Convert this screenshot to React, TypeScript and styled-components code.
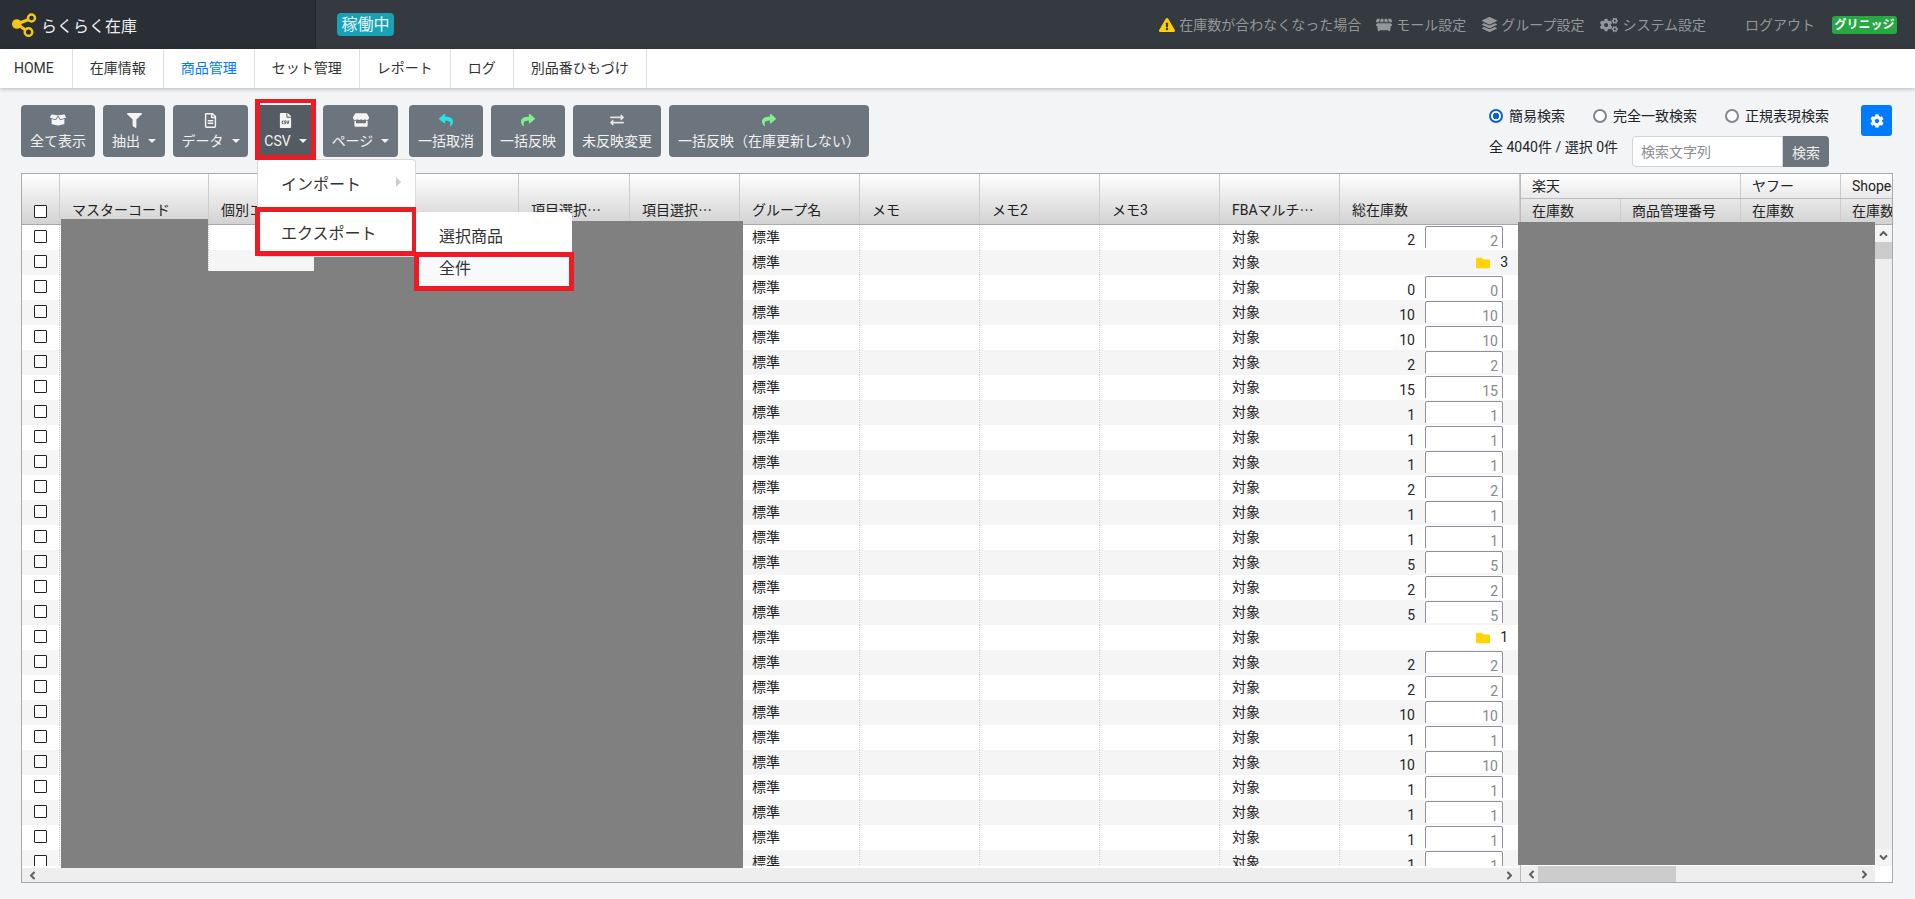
import React from 'react';
import styled, { createGlobalStyle } from 'styled-components';
import {
    FaAngleDown, FaAngleLeft, FaAngleRight, FaAngleUp, FaBoxOpen, FaCog, FaCogs, FaDumpster,
    FaExchangeAlt, FaExclamationTriangle, FaFileCsv, FaFilter, FaFolder, FaLayerGroup,
    FaRegFileAlt, FaReply, FaShare, FaStore,
} from 'react-icons/fa';

const FONT = `Roboto, "Noto Sans CJK JP", sans-serif`;

const GlobalStyle = createGlobalStyle`
    html, body {
        margin: 0;
        padding: 0;
        height: 100%;
        overflow: hidden;
        background: #f3f4f6;
        font-family: ${FONT};
        font-size: 14px;
        color: #212529;
    }
    * { box-sizing: border-box; }
`;

/* top bar */
const TopBar = styled.header`
    display: flex;
    height: 49px;
    background: #343a40;
`;
const Brand = styled.div`
    display: flex;
    align-items: center;
    gap: 4px;
    width: 316px;
    padding-left: 12px;
    background: #2a2e35;
    border-right: 1px solid #23262b;
    color: #eee;
    font-size: 16px;
`;
const StatusBadge = styled.span`
    align-self: center;
    margin-left: 21px;
    width: 57px;
    height: 23px;
    border-radius: 4px;
    background: #17a2b8;
    color: #e8f6f8;
    font-size: 16px;
    line-height: 23px;
    text-align: center;
`;
const TopLinks = styled.nav`
    display: flex;
    align-items: center;
    margin-left: auto;
    padding-right: 18px;
    color: #94979a;
    line-height: 20px;
`;
const TopLink = styled.span<{ $gap?: number }>`
    display: flex;
    align-items: center;
    gap: 4px;
    margin-right: ${p => p.$gap ?? 15}px;
    svg { flex: none; }
`;
const PlanBadge = styled.span`
    width: 65px;
    height: 18px;
    margin-top: 1px;
    border-radius: 3px;
    background: #28a745;
    color: #fff;
    font-size: 12px;
    font-weight: 700;
    line-height: 18px;
    text-align: center;
`;

/* menu */
const MenuBar = styled.nav`
    position: relative;
    display: flex;
    height: 39px;
    background: #fff;
    box-shadow: 0 1px 4px rgba(0, 0, 0, 0.25);
`;
const MenuLink = styled.a<{ $active?: boolean }>`
    padding: 0 17px;
    border-right: 1px solid #dfdfdf;
    color: ${p => (p.$active ? '#007bff' : '#333')};
    line-height: 39px;
    &:first-child { padding: 0 18px 0 14px; }
`;

/* toolbar */
const Main = styled.main`
    padding: 17px 22px 0 21px;
`;
const Toolbar = styled.div`
    position: relative;
    z-index: 5;
    display: flex;
    align-items: flex-start;
    margin-bottom: 6px;
`;
const ButtonGroup = styled.div`
    display: flex;
    gap: 8px;
`;
const ToolSlot = styled.div<{ $apart?: boolean }>`
    position: relative;
    margin-left: ${p => (p.$apart ? 3 : 0)}px;
`;
const ToolButton = styled.button<{ $pressed?: boolean; $w?: number }>`
    display: flex;
    flex-direction: column;
    align-items: center;
    width: ${p => (p.$w ? `${p.$w}px` : 'auto')};
    height: 52px;
    padding: 6px ${p => (p.$w ? 0 : 9)}px 0;
    border: 0;
    border-radius: 4px;
    background: ${p => (p.$pressed ? '#545b62' : '#6c757d')};
    color: #f1f1f1;
    font-family: ${FONT};
    font-size: 14px;
    white-space: nowrap;
`;
const ToolIcon = styled.span<{ $color?: string }>`
    display: flex;
    align-items: center;
    justify-content: center;
    height: 18px;
    color: ${p => p.$color ?? '#f4f4f4'};
`;
const ToolLabel = styled.span`
    display: flex;
    align-items: center;
    height: 22px;
    margin-top: 1px;
    line-height: 22px;
`;
const Caret = styled.i`
    width: 0;
    height: 0;
    margin-left: 8px;
    border-top: 4px solid #f1f1f1;
    border-left: 4px solid transparent;
    border-right: 4px solid transparent;
`;
const RedFrame = styled.span`
    position: absolute;
    z-index: 3;
    border: 5px solid #ed1c24;
    pointer-events: none;
`;
const CsvFrame = styled(RedFrame)`
    top: -6px;
    left: -1px;
    right: -1px;
    bottom: -3px;
    border-top-width: 4px;
`;

/* csv dropdown */
const Dropdown = styled.div`
    position: absolute;
    top: 54px;
    left: 1px;
    width: 159px;
    height: 98px;
    border: 1px solid rgba(0, 0, 0, 0.15);
    border-radius: 4px;
    background: #fff;
    color: #333;
    font-size: 16px;
`;
const DropdownItem = styled.div`
    position: relative;
    height: 49px;
    padding-left: 23px;
    line-height: 49px;
`;
const SubCaret = styled.i`
    position: absolute;
    top: 17px;
    right: 14px;
    width: 0;
    height: 0;
    border-left: 5px solid #ccc;
    border-top: 5px solid transparent;
    border-bottom: 5px solid transparent;
`;
const SubMenu = styled.div`
    position: absolute;
    top: 52px;
    left: 158px;
    width: 156px;
    height: 77px;
    padding-top: 9px;
    border-radius: 4px;
    background: #fff;
`;
const SubItem = styled.div<{ $hover?: boolean }>`
    height: 32px;
    padding-left: 23px;
    background: ${p => (p.$hover ? '#f8f9fa' : 'transparent')};
    line-height: 32px;
`;
const ExportFrame = styled(RedFrame)`
    top: 47px;
    left: -3px;
    width: 161px;
    height: 49px;
    border-right-width: 4px;
`;
const AllFrame = styled(RedFrame)`
    top: 92px;
    left: 156px;
    width: 160px;
    height: 39px;
`;

/* search */
const SearchPanel = styled.div`
    display: flex;
    flex-direction: column;
    width: 340px;
    margin-left: auto;
`;
const RadioRow = styled.div`
    display: flex;
    gap: 28px;
    height: 22px;
`;
const RadioLabel = styled.label`
    display: flex;
    align-items: center;
    gap: 6px;
    line-height: 22px;
`;
const Radio = styled.input`
    appearance: none;
    flex: none;
    width: 14px;
    height: 14px;
    margin: 0;
    border: 2px solid #85858f;
    border-radius: 50%;
    background: #fff;
    &:checked {
        border-color: #0b62d8;
        background: radial-gradient(circle, #0b62d8 0 3px, #fff 3.5px);
    }
`;
const SearchRow = styled.div`
    display: flex;
    align-items: flex-start;
    margin-top: 9px;
`;
const Stats = styled.span`
    width: 143px;
    line-height: 22px;
`;
const SearchInput = styled.input`
    width: 151px;
    height: 31px;
    padding: 0 8px;
    border: 1px solid #ced4da;
    border-radius: 4px 0 0 4px;
    background: #fff;
    font-family: ${FONT};
    font-size: 14px;
    &::placeholder { color: #8a8f94; }
`;
const SearchButton = styled.button`
    width: 46px;
    height: 31px;
    padding: 0;
    border: 0;
    border-radius: 0 4px 4px 0;
    background: #6c757d;
    color: #eee;
    font-family: ${FONT};
    font-size: 14px;
`;
const GearButton = styled.button`
    display: flex;
    align-items: center;
    justify-content: center;
    width: 31px;
    height: 31px;
    margin: 0 1px 0 32px;
    padding: 0;
    border: 0;
    border-radius: 3px;
    background: #007bff;
    color: #fff;
`;

/* table */
const TableFrame = styled.section`
    position: relative;
    display: flex;
    height: 710px;
    border: 1px solid #aaa;
    background: #fff;
    overflow: hidden;
`;
const LeftPane = styled.div`
    display: flex;
    flex-direction: column;
    width: 1498px;
    flex: none;
`;
const RightPane = styled.div`
    display: flex;
    flex-direction: column;
    flex: 1;
    min-width: 0;
    border-left: 1px solid #bbb;
`;
const HeadRow = styled.div`
    display: flex;
    flex: none;
    height: 51px;
    border-bottom: 1px solid #aaa;
    background: linear-gradient(#fff, #d2d2d2);
`;
const HeadCell = styled.div<{ $w: number }>`
    display: flex;
    align-items: flex-end;
    flex: none;
    width: ${p => p.$w}px;
    padding: 0 0 3px 12px;
    border-right: 1px solid #ccc;
    color: #222;
    line-height: 22px;
    white-space: nowrap;
    overflow: hidden;
`;
const HeadCheckCell = styled(HeadCell)`
    padding: 0 0 6px 12px;
`;
const Ellipsis = styled.span`
    font-family: "Noto Sans CJK JP", sans-serif;
`;
const Body = styled.div`
    flex: 1;
    min-height: 0;
    margin-bottom: 2px;
    overflow: hidden;
`;
const Row = styled.div`
    display: flex;
    height: 25px;
    &:nth-child(even) { background: #f5f5f5; }
`;
const Cell = styled.div<{ $w: number }>`
    flex: none;
    width: ${p => p.$w}px;
    padding-left: 12px;
    border-right: 1px dotted #ccc;
    color: #222;
    line-height: 25px;
    white-space: nowrap;
    overflow: hidden;
`;
const StockCell = styled.div<{ $w: number }>`
    display: flex;
    justify-content: flex-end;
    flex: none;
    width: ${p => p.$w}px;
    height: 23px;
    padding-right: 17px;
    overflow: hidden;
`;
const StockValue = styled.span`
    margin-right: 10px;
    padding-top: 3px;
    line-height: 25px;
`;
const StockInput = styled.input`
    flex: none;
    width: 78px;
    height: 30px;
    margin: 1px 0 0;
    padding: 0 4px 0 0;
    border: 1px solid #8f8f9d;
    border-radius: 2px;
    background: #fff;
    color: #888;
    font-family: ${FONT};
    font-size: 14px;
    text-align: right;
`;
const FolderStock = styled.div<{ $w: number }>`
    display: flex;
    align-items: center;
    justify-content: flex-end;
    gap: 10px;
    flex: none;
    width: ${p => p.$w}px;
    padding-right: 12px;
    line-height: 25px;
    svg { color: #ffd400; }
`;
const Check = styled.input`
    appearance: none;
    display: block;
    width: 13px;
    height: 13px;
    margin: 5px 0 0;
    border: 1.5px solid #222;
    border-radius: 1px;
    background: #fff;
`;
const HeadCheck = styled(Check)`
    margin: 0;
`;
const RightHead = styled.div`
    flex: none;
    height: 51px;
    border-bottom: 1px solid #aaa;
    background: linear-gradient(#fff, #d2d2d2);
    overflow: hidden;
`;
const RightHeadRow = styled.div<{ $line?: boolean }>`
    display: flex;
    height: 25px;
    border-bottom: ${p => (p.$line ? '1px solid #bbb' : '0')};
`;
const RightHeadCell = styled.div<{ $w: number }>`
    flex: none;
    width: ${p => p.$w}px;
    padding-left: 11px;
    border-right: 1px solid #ccc;
    color: #222;
    line-height: 25px;
    white-space: nowrap;
`;
const RightBody = styled.div`
    display: flex;
    flex: 1;
    min-height: 0;
`;
const RightCells = styled.div`
    flex: 1;
    background: #fff;
`;
const VScroll = styled.div`
    display: flex;
    flex-direction: column;
    flex: none;
    width: 17px;
    background: #eee;
`;
const VArrow = styled.div`
    display: flex;
    align-items: center;
    justify-content: center;
    height: 17px;
    color: #606060;
    background: #f4f4f4;
`;
const VThumb = styled.div`
    height: 17px;
    background: #ccc;
`;
const VTrack = styled.div`
    flex: 1;
`;
const HScroll = styled.div`
    display: flex;
    align-items: center;
    flex: none;
    height: 14px;
    background: #eee;
    color: #606060;
`;
const LeftHScroll = styled(HScroll)`
    justify-content: space-between;
    padding: 0 4px;
`;
const RightScrollRow = styled.div`
    display: flex;
    flex: none;
    height: 16px;
    background: #fff;
`;
const RightHScroll = styled(HScroll)`
    flex: 1;
    height: 16px;
    padding: 0 4px;
`;
const HThumb = styled.div`
    width: 138px;
    height: 100%;
    background: #ccc;
`;
const HGrow = styled.div`
    flex: 1;
`;
const Corner = styled.div`
    width: 17px;
`;

/* masked areas in the capture */
const Redaction = styled.div<{ $x: number; $y: number; $w: number; $h: number }>`
    position: absolute;
    left: ${p => p.$x}px;
    top: ${p => p.$y}px;
    width: ${p => p.$w}px;
    height: ${p => p.$h}px;
    background: #808080;
`;

const Logo = () => (
    <svg width="25" height="25" viewBox="0 0 25 25">
        <g stroke="#f5c518" strokeWidth="2.500" fill="none">
            <path d="M5 12 L18 7 M5 12 L15 19" strokeWidth="3" />
            <circle cx="19.500" cy="6" r="3.500" fill="#2a2e35" />
            <circle cx="16.500" cy="20" r="3.800" fill="#2a2e35" />
        </g>
        <circle cx="4.800" cy="12" r="4.800" fill="#f5c518" />
    </svg>
);

const TOOLS = [
    { label: '全て表示', icon: <FaBoxOpen size={16} /> },
    { label: '抽出', icon: <FaFilter size={15} />, caret: true },
    { label: 'データ', icon: <FaRegFileAlt size={15} />, caret: true, w: 75 },
    { label: 'CSV', icon: <FaFileCsv size={15} />, caret: true, csv: true, w: 59 },
    { label: 'ページ', icon: <FaStore size={16} />, caret: true, w: 75 },
    { label: '一括取消', icon: <FaReply size={14} />, color: '#22e4ea', apart: true },
    { label: '一括反映', icon: <FaShare size={14} />, color: '#7ff08c' },
    { label: '未反映変更', icon: <FaExchangeAlt size={14} />, color: '#e4e4e4' },
    { label: '一括反映（在庫更新しない）', icon: <FaShare size={14} />, color: '#7ff08c' },
];

const MENU = ['HOME', '在庫情報', '商品管理', 'セット管理', 'レポート', 'ログ', '別品番ひもづけ'];

const COLUMNS = [
    { title: 'マスターコード', w: 149 },
    { title: '個別コード', w: 110 },
    { title: '', w: 200 },
    { title: '項目選択', more: true, w: 111 },
    { title: '項目選択', more: true, w: 110 },
    { title: 'グループ名', w: 120, text: '標準' },
    { title: 'メモ', w: 120 },
    { title: 'メモ2', w: 120 },
    { title: 'メモ3', w: 120 },
    { title: 'FBAマルチ', more: true, w: 120, text: '対象' },
];

// a number is a stock input, folder: a parent row with children
const STOCK: (number | { folder: number })[] = [
    2, { folder: 3 }, 0, 10, 10, 2, 15, 1, 1, 1, 2, 1, 1, 5, 2, 5, { folder: 1 }, 2, 2, 10, 1, 10, 1, 1, 1, 1,
];

const App: React.FC = () => {
    return (
        <>
            <GlobalStyle />
            <TopBar>
                <Brand><Logo />らくらく在庫</Brand>
                <StatusBadge>稼働中</StatusBadge>
                <TopLinks>
                    <TopLink><FaExclamationTriangle size={16} color="#ffd000" />在庫数が合わなくなった場合</TopLink>
                    <TopLink $gap={16}><FaDumpster size={16} />モール設定</TopLink>
                    <TopLink $gap={16}><FaLayerGroup size={15} />グループ設定</TopLink>
                    <TopLink $gap={39}><FaCogs size={18} />システム設定</TopLink>
                    <TopLink $gap={17}>ログアウト</TopLink>
                    <PlanBadge>グリニッジ</PlanBadge>
                </TopLinks>
            </TopBar>
            <MenuBar>
                {MENU.map(m => <MenuLink key={m} $active={m === '商品管理'}>{m}</MenuLink>)}
            </MenuBar>
            <Main>
                <Toolbar>
                    <ButtonGroup>
                        {TOOLS.map((t, i) => (
                            <ToolSlot key={i} $apart={t.apart}>
                                <ToolButton $pressed={t.csv} $w={t.w}>
                                    <ToolIcon $color={t.color}>{t.icon}</ToolIcon>
                                    <ToolLabel>{t.label}{t.caret && <Caret />}</ToolLabel>
                                </ToolButton>
                                {t.csv && (
                                    <>
                                        <CsvFrame />
                                        <Dropdown>
                                            <DropdownItem>インポート<SubCaret /></DropdownItem>
                                            <DropdownItem>エクスポート</DropdownItem>
                                            <SubMenu>
                                                <SubItem>選択商品</SubItem>
                                                <SubItem $hover>全件</SubItem>
                                            </SubMenu>
                                            <ExportFrame />
                                            <AllFrame />
                                        </Dropdown>
                                    </>
                                )}
                            </ToolSlot>
                        ))}
                    </ButtonGroup>
                    <SearchPanel>
                        <RadioRow>
                            <RadioLabel><Radio type="radio" name="mode" defaultChecked />簡易検索</RadioLabel>
                            <RadioLabel><Radio type="radio" name="mode" />完全一致検索</RadioLabel>
                            <RadioLabel><Radio type="radio" name="mode" />正規表現検索</RadioLabel>
                        </RadioRow>
                        <SearchRow>
                            <Stats>全 4040件 / 選択 0件</Stats>
                            <SearchInput placeholder="検索文字列" />
                            <SearchButton>検索</SearchButton>
                        </SearchRow>
                    </SearchPanel>
                    <GearButton><FaCog size={14} /></GearButton>
                </Toolbar>
                <TableFrame>
                    <LeftPane>
                        <HeadRow>
                            <HeadCheckCell $w={38}><HeadCheck type="checkbox" /></HeadCheckCell>
                            {COLUMNS.map((c, i) => (
                                <HeadCell key={i} $w={c.w}>
                                    <span>{c.title}{c.more && <Ellipsis>…</Ellipsis>}</span>
                                </HeadCell>
                            ))}
                            <HeadCell $w={180}>総在庫数</HeadCell>
                        </HeadRow>
                        <Body>
                            {STOCK.map((s, r) => (
                                <Row key={r}>
                                    <Cell $w={38}><Check type="checkbox" /></Cell>
                                    {COLUMNS.map((c, i) => <Cell key={i} $w={c.w}>{c.text}</Cell>)}
                                    {typeof s === 'number' ? (
                                        <StockCell $w={180}>
                                            <StockValue>{s}</StockValue>
                                            <StockInput readOnly value={s} />
                                        </StockCell>
                                    ) : (
                                        <FolderStock $w={180}><FaFolder size={14} />{s.folder}</FolderStock>
                                    )}
                                </Row>
                            ))}
                        </Body>
                        <LeftHScroll><FaAngleLeft size={13} /><FaAngleRight size={13} /></LeftHScroll>
                    </LeftPane>
                    <RightPane>
                        <RightHead>
                            <RightHeadRow $line>
                                <RightHeadCell $w={220}>楽天</RightHeadCell>
                                <RightHeadCell $w={100}>ヤフー</RightHeadCell>
                                <RightHeadCell $w={100}>Shopee</RightHeadCell>
                            </RightHeadRow>
                            <RightHeadRow>
                                <RightHeadCell $w={100}>在庫数</RightHeadCell>
                                <RightHeadCell $w={120}>商品管理番号</RightHeadCell>
                                <RightHeadCell $w={100}>在庫数</RightHeadCell>
                                <RightHeadCell $w={100}>在庫数</RightHeadCell>
                            </RightHeadRow>
                        </RightHead>
                        <RightBody>
                            <RightCells />
                            <VScroll>
                                <VArrow><FaAngleUp size={13} /></VArrow>
                                <VThumb />
                                <VTrack />
                                <VArrow><FaAngleDown size={13} /></VArrow>
                            </VScroll>
                        </RightBody>
                        <RightScrollRow>
                            <RightHScroll>
                                <FaAngleLeft size={13} />
                                <HThumb />
                                <HGrow />
                                <FaAngleRight size={13} />
                            </RightHScroll>
                            <Corner />
                        </RightScrollRow>
                    </RightPane>
                    <Redaction $x={39} $y={45} $w={147} $h={649} />
                    <Redaction $x={186} $y={97} $w={106} $h={597} />
                    <Redaction $x={292} $y={47} $w={429} $h={647} />
                    <Redaction $x={1496} $y={48} $w={357} $h={643} />
                </TableFrame>
            </Main>
        </>
    );
};

export default App;
